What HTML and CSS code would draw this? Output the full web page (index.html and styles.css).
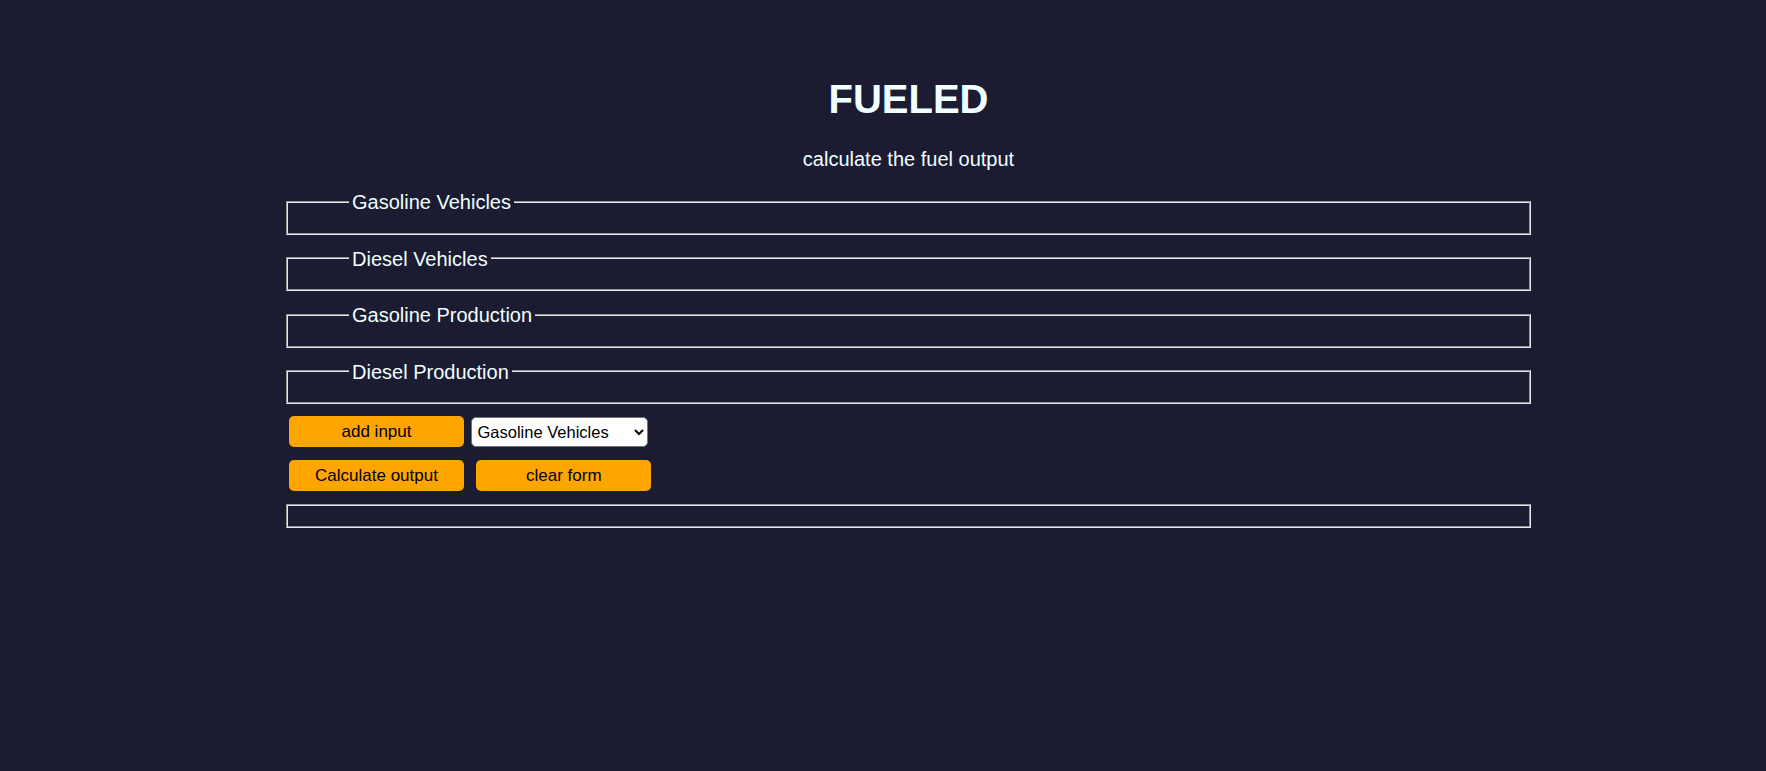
FILE: index.html
```html
<!DOCTYPE html>
<html lang="en">
<head>
<meta charset="utf-8">
<title>FUELED</title>
<link rel="stylesheet" href="styles.css">
</head>
<body>
<main class="app">
  <h1 class="title">FUELED</h1>
  <p class="subtitle">calculate the fuel output</p>
  <form class="form">
    <fieldset class="group"><legend class="group-title">Gasoline Vehicles</legend></fieldset>
    <fieldset class="group"><legend class="group-title">Diesel Vehicles</legend></fieldset>
    <fieldset class="group"><legend class="group-title">Gasoline Production</legend></fieldset>
    <fieldset class="group"><legend class="group-title">Diesel Production</legend></fieldset>
    <div class="row row-add">
      <button type="button" class="btn">add input</button>
      <select class="picker">
        <option>Gasoline Vehicles</option>
        <option>Diesel Vehicles</option>
        <option>Gasoline Production</option>
        <option>Diesel Production</option>
      </select>
    </div>
    <div class="row row-actions">
      <button type="submit" class="btn">Calculate output</button>
      <button type="button" class="btn">clear form</button>
    </div>
    <fieldset class="group output"></fieldset>
  </form>
</main>
</body>
</html>
```

FILE: styles.css
```css
html, body {
  margin: 0;
  background: #1b1b32;
}

body {
  padding-left: 51px;
  color: #f0ffff;
  font-family: "Liberation Sans", Arial, sans-serif;
}

.app {
  width: 1245px;
  margin: 0 auto;
}

.title {
  margin: 76px 0 26px;
  font-size: 40px;
  line-height: 46px;
  font-weight: bold;
  text-align: center;
}

.subtitle {
  margin: 0 0 19px;
  font-size: 20px;
  line-height: 23px;
  text-align: center;
}

.form {
  margin: 0;
}

.group {
  margin: 0 0 12px;
  padding: 7px 15px 12.5px;
  border: 2px groove #e8e8e8;
  font-size: 20px;
  line-height: 23px;
}

.group-title {
  margin-left: 46px;
  padding: 1px 3px 0;
  font-size: 20px;
  line-height: 22px;
}

.row {
  display: flex;
  align-items: center;
  height: 31px;
  margin: 0 0 13px;
  padding-left: 3px;
}

.row-add {
  gap: 6.5px;
}

.row-actions {
  gap: 12.3px;
}

.btn {
  width: 175px;
  height: 31px;
  margin: 0;
  padding: 0;
  border: none;
  border-radius: 5px;
  background: #ffa500;
  color: #000;
  font-family: "Liberation Sans", Arial, sans-serif;
  font-size: 17px;
}

.picker {
  width: 177px;
  height: 30px;
  margin: 0;
  padding: 0 2px;
  border: 1px solid #767676;
  border-radius: 5px;
  background: #fff;
  color: #000;
  font-family: "Liberation Sans", Arial, sans-serif;
  font-size: 16.5px;
}

.output {
  margin-top: 0;
}
```
